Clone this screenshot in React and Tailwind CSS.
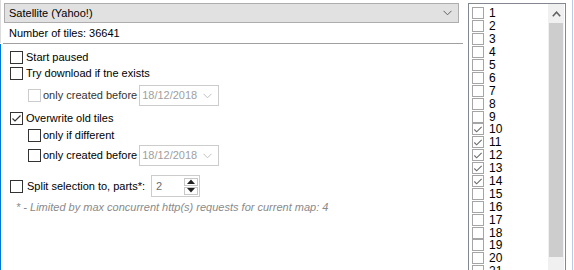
import React from 'react';

const font = { fontFamily: '"Liberation Sans", Arial, sans-serif' };

function Box({ checked, disabled, small }) {
    const size = small ? 'w-[12px] h-[12px]' : 'w-[13px] h-[13px]';
    const border = disabled ? 'border-[#cccccc]' : small ? 'border-[#a5a5a5]' : 'border-[#333333]';
    return (
        <div className={`${size} border ${border} bg-white shrink-0 flex items-center justify-center`}>
            {checked && (
                <svg width="11" height="11" viewBox="0 0 11 11">
                    <path d="M1.5 5.5 L4 8 L9.5 2.5" fill="none" stroke={small ? '#6a6a6a' : '#333'} strokeWidth="1.2" />
                </svg>
            )}
        </div>
    );
}

function Chevron({ color = '#606060' }) {
    return (
        <svg width="9" height="6" viewBox="0 0 9 6">
            <path d="M0.5 0.8 L4.5 4.8 L8.5 0.8" fill="none" stroke={color} strokeWidth="1" />
        </svg>
    );
}

function DateBox() {
    return (
        <div className="w-[80px] h-[21px] border border-[#cccccc] bg-white flex items-center justify-between pl-[2px] pr-[6px] text-[#a0a0a0]">
            <span>18/12/2018</span>
            <Chevron color="#c0c0c0" />
        </div>
    );
}

export default function App() {
    const items = Array.from({ length: 21 }, (_, i) => i + 1);
    return (
        <div className="w-[574px] h-[270px] bg-white flex overflow-hidden text-[11px] text-black" style={font}>
            {/* left panel */}
            <div className="w-[463px] shrink-0 flex flex-col">
                <div className="border-l border-[#dcdcdc] pl-[3px] pt-[3px]">
                    <div className="w-[455px] h-[20px] bg-[#e1e1e1] border border-[#adadad] flex items-center justify-between pl-[4px] pr-[6px]">
                        <span>Satellite (Yahoo!)</span>
                        <Chevron />
                    </div>
                    <div className="h-[20px] flex items-center pl-[5px]">Number of tiles: 36641</div>
                </div>
                <div className="ml-[3px] border-b border-[#a0a0a0]" />
                <div className="flex-1 border-l border-[#0078d7] flex flex-col pt-[5px] pl-[9px]">
                    <div className="h-[16px] flex items-center gap-[3px]">
                        <Box />
                        <span>Start paused</span>
                    </div>
                    <div className="h-[16px] flex items-center gap-[3px]">
                        <Box />
                        <span>Try download if tne exists</span>
                    </div>
                    <div className="h-[21px] mt-[4px] ml-[18px] flex items-center gap-[2px]">
                        <Box disabled />
                        <span className="text-[#333]">only created before</span>
                        <DateBox />
                    </div>
                    <div className="h-[16px] mt-[4px] flex items-center gap-[3px]">
                        <Box checked />
                        <span>Overwrite old tiles</span>
                    </div>
                    <div className="h-[19px] ml-[18px] flex items-center gap-[2px]">
                        <Box />
                        <span>only if different</span>
                    </div>
                    <div className="h-[21px] ml-[18px] flex items-center gap-[2px]">
                        <Box />
                        <span>only created before</span>
                        <DateBox />
                    </div>
                    <div className="h-[22px] mt-[9px] flex items-center">
                        <Box />
                        <span className="ml-[4px]">Split selection to, parts*:</span>
                        <div className="ml-[6px] w-[49px] h-[22px] border border-[#cccccc] flex items-center justify-between pl-[4px] pr-[1px]">
                            <span className="text-[#6d6d6d]">2</span>
                            <div className="flex flex-col gap-[1px]">
                                <div className="w-[14px] h-[8px] border border-[#c8c8c8] flex items-center justify-center">
                                    <svg width="8" height="5" viewBox="0 0 8 5"><path d="M0 5 L4 0.5 L8 5 Z" fill="#222" /></svg>
                                </div>
                                <div className="w-[14px] h-[8px] border border-[#c8c8c8] flex items-center justify-center">
                                    <svg width="8" height="5" viewBox="0 0 8 5"><path d="M0 0 L8 0 L4 4.5 Z" fill="#222" /></svg>
                                </div>
                            </div>
                        </div>
                    </div>
                    <div className="h-[14px] mt-[3px] ml-[6px] flex items-center italic text-[#8a8a8a]">
                        * - Limited by max concurrent http(s) requests for current map: 4
                    </div>
                </div>
            </div>

            {/* right list */}
            <div className="ml-[5px] mt-[3px] w-[98px] h-[280px] border border-[#828790] flex shrink-0">
                <div className="flex-1 flex flex-col pt-[3px] pl-[3px]">
                    {items.map((n) => (
                        <div key={n} className="h-[12.9px] shrink-0 flex items-center gap-[5px]">
                            <Box small checked={n >= 10 && n <= 14} />
                            <span className="text-[12px] leading-none">{n}</span>
                        </div>
                    ))}
                </div>
                <div className="w-[16px] mr-[1px] flex flex-col bg-[#f0f0f0]">
                    <div className="h-[19px] flex items-center justify-center">
                        <svg width="9" height="6" viewBox="0 0 9 6">
                            <path d="M0.8 5.2 L4.5 1.2 L8.2 5.2" fill="none" stroke="#606060" strokeWidth="1.5" />
                        </svg>
                    </div>
                    <div className="h-[234px] mx-[1px] bg-[#cdcdcd]" />
                </div>
            </div>
            <div className="ml-[6px] w-[1px] h-full bg-[#b9c9e6]" />
        </div>
    );
}
